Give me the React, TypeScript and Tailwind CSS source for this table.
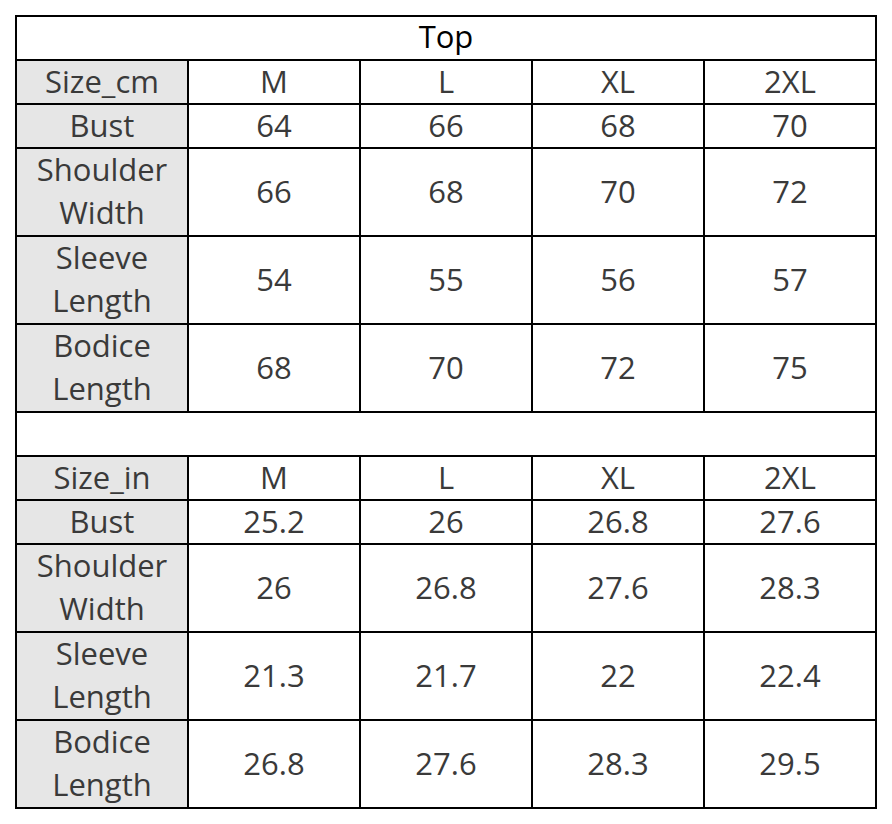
import React from "react";

type Row = { label: string[]; values: string[] };

const cm: Row[] = [
  { label: ["Bust"], values: ["64", "66", "68", "70"] },
  { label: ["Shoulder", "Width"], values: ["66", "68", "70", "72"] },
  { label: ["Sleeve", "Length"], values: ["54", "55", "56", "57"] },
  { label: ["Bodice", "Length"], values: ["68", "70", "72", "75"] },
];

const inch: Row[] = [
  { label: ["Bust"], values: ["25.2", "26", "26.8", "27.6"] },
  { label: ["Shoulder", "Width"], values: ["26", "26.8", "27.6", "28.3"] },
  { label: ["Sleeve", "Length"], values: ["21.3", "21.7", "22", "22.4"] },
  { label: ["Bodice", "Length"], values: ["26.8", "27.6", "28.3", "29.5"] },
];

function Block({ unit, rows }: { unit: string; rows: Row[] }) {
  return (
    <>
      <div className="h-[42px] pb-[2px] bg-[#e6e6e6] flex items-center justify-center">{unit}</div>
      {["M", "L", "XL", "2XL"].map((s) => (
        <div key={s} className="h-[42px] pb-[2px] bg-white flex items-center justify-center">
          {s}
        </div>
      ))}
      {rows.map((r) => {
        const h = r.label.length > 1 ? "h-[86px]" : "h-[42px]";
        return (
          <React.Fragment key={r.label.join(" ")}>
            <div className={`${h} pb-[2px] bg-[#e6e6e6] flex flex-col items-center justify-center leading-[43px]`}>
              {r.label.map((l) => (
                <span key={l}>{l}</span>
              ))}
            </div>
            {r.values.map((v, i) => (
              <div key={i} className={`${h} pb-[2px] bg-white flex items-center justify-center`}>
                {v}
              </div>
            ))}
          </React.Fragment>
        );
      })}
    </>
  );
}

export default function App() {
  return (
    <div className="w-[892px] h-[824px] bg-white pt-[15px] pl-[15px]">
      <div
        className="grid grid-cols-[repeat(5,170px)] gap-[2px] p-[2px] bg-black w-fit text-[31px] leading-none text-[#3a3a3a]"
        style={{ fontFamily: '"Open Sans", "Noto Sans", sans-serif' }}
      >
        <div className="col-span-5 h-[42px] pb-[3px] bg-white flex items-center justify-center text-black">Top</div>
        <Block unit="Size_cm" rows={cm} />
        <div className="col-span-5 h-[42px] bg-white" />
        <Block unit="Size_in" rows={inch} />
      </div>
    </div>
  );
}
